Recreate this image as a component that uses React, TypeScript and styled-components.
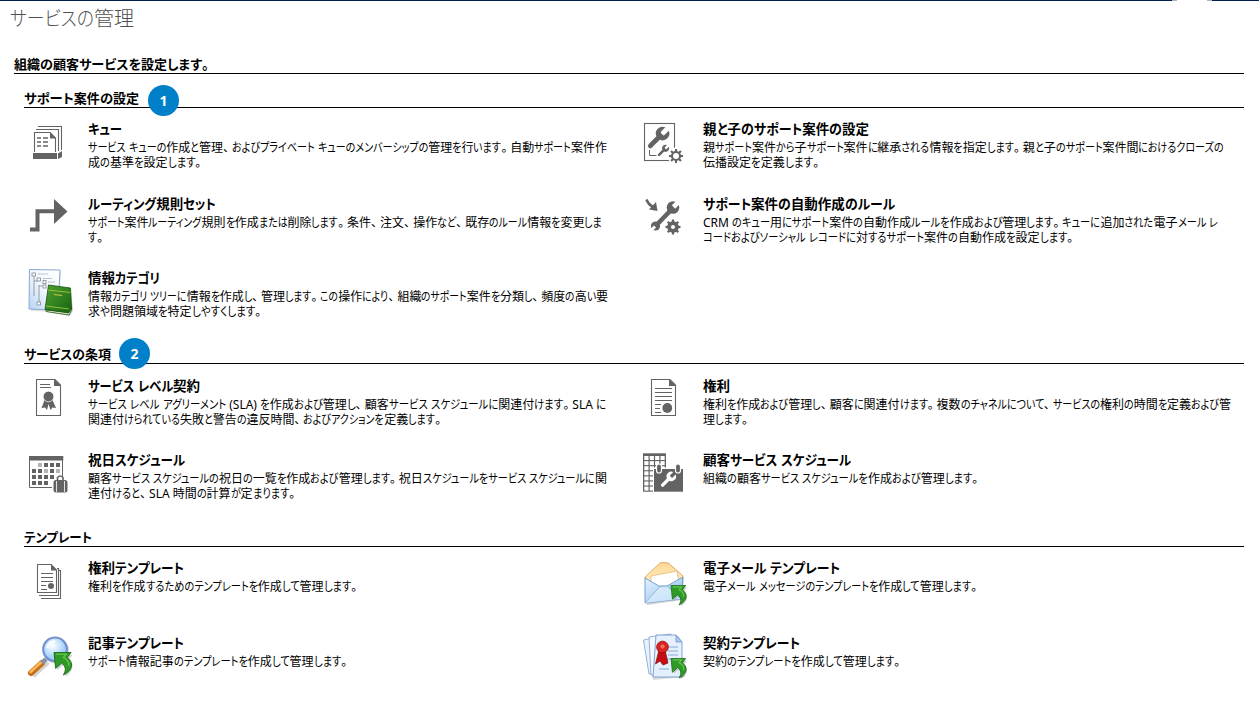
import React, { useLayoutEffect, useRef, useState } from 'react';
import styled, { createGlobalStyle } from 'styled-components';

const GREY = '#636363';

const GlobalStyle = createGlobalStyle`
  * { box-sizing: border-box; }
  body {
    margin: 0;
    background: #fff;
    color: #000;
    font-family: 'Noto Sans', 'Noto Sans CJK JP', sans-serif;
    font-feature-settings: 'palt';
  }
`;

const Page = styled.main`
  width: 1259px;
  height: 707px;
  overflow: hidden;
  background: #fff;
`;

const TopBar = styled.div`
  display: flex;
  height: 1px;
  background: #001f50;
`;

const TopNotch = styled.div`
  width: 40px;
  height: 1px;
  margin-left: 1172px;
  background: #fff;
  border: solid #b4b4b4;
  border-width: 0 5px;
`;

const PageTitle = styled.h1`
  margin: 0;
  height: 54px;
  padding: 5px 0 0 10px;
  font-size: 20px;
  line-height: 26px;
  font-weight: 300;
  color: #505050;
`;

const Intro = styled.h2`
  margin: 0 15px 0 14px;
  height: 19px;
  border-bottom: 1px solid #000;
  font-size: 13px;
  line-height: 18px;
  font-weight: 700;
`;

const Section = styled.section`
  margin: 0 15px 0 24px;
`;

const Heading = styled.h3`
  position: relative;
  margin: 0;
  height: 34px;
  padding-top: 15px;
  border-bottom: 1px solid #000;
  font-size: 13px;
  line-height: 18px;
  font-weight: 700;
`;

const Badge = styled.span<{ $left: number; $top: number }>`
  position: absolute;
  left: ${(p) => p.$left}px;
  top: ${(p) => p.$top}px;
  width: 31px;
  height: 31px;
  border-radius: 50%;
  background: #0080c8;
  color: #fff;
  font-family: 'Open Sans', sans-serif;
  font-size: 14px;
  font-weight: 700;
  line-height: 31px;
  text-align: center;
`;

const Grid = styled.div<{ $rows: string }>`
  display: grid;
  grid-template-columns: 615px 1fr;
  grid-template-rows: ${(p) => p.$rows};
`;

const Item = styled.div`
  display: flex;
`;

const IconCell = styled.div`
  width: 64px;
  padding-top: 11px;
  flex: none;
`;

const ItemText = styled.div<{ $drop?: number }>`
  padding-top: ${(p) => 12 + (p.$drop ?? 0)}px;
`;

const ItemTitle = styled.div`
  height: 20px;
  font-size: 13.5px;
  line-height: 19px;
  font-weight: 700;
`;

const ItemDescription = styled.div`
  font-size: 12px;
  line-height: 15px;
`;

const Line = styled.span`
  display: block;
  width: max-content;
  white-space: pre;
`;

const Kana = styled.span`
  display: inline-block;
  transform-origin: 0 50%;
`;

const Mark = styled.span`
  letter-spacing: 0.25em;
`;

const PARTS = /([\u3041-\u30ff]+|[\u3001\u3002]+)/;

/* One line of text whose kana are condensed until the line has its width. */
function FitLine({ text, width }: { text: string; width: number }) {
  const ref = useRef<HTMLSpanElement>(null);
  const [fit, setFit] = useState<{ scale: number; runs: number[] } | null>(null);
  useLayoutEffect(() => {
    const line = ref.current!;
    const runs = Array.from(line.querySelectorAll<HTMLElement>('[data-kana]')).map(
      (run) => run.getBoundingClientRect().width,
    );
    const total = runs.reduce((a, b) => a + b, 0);
    if (total) {
      const natural = line.getBoundingClientRect().width;
      setFit({ scale: 1 + (width - natural) / total, runs });
    }
  }, []);
  let run = -1;
  return (
    <Line ref={ref}>
      {text.split(PARTS).map((part, i) => {
        if (i % 2 === 0) return part;
        if (/^[\u3001\u3002]/.test(part)) return <Mark key={i}>{part}</Mark>;
        run += 1;
        return (
          <Kana
            key={i}
            data-kana
            style={
              fit
                ? { transform: `scaleX(${fit.scale})`, marginRight: (fit.scale - 1) * fit.runs[run] }
                : undefined
            }
          >
            {part}
          </Kana>
        );
      })}
    </Line>
  );
}

const Svg = styled.svg.attrs({ width: 52, height: 52, viewBox: '0 0 52 52' })`
  display: block;
`;

const WRENCH =
  'M14.7 6.3a1 1 0 0 0 0 1.4l1.6 1.6a1 1 0 0 0 1.4 0l3.77-3.77a6 6 0 0 1-7.94 7.94l-6.91 6.91a2.12 2.12 0 0 1-3-3l6.91-6.91a6 6 0 0 1 7.94-7.94l-3.76 3.76z';

function Gear({ x, y, r, dot }: { x: number; y: number; r: number; dot?: boolean }) {
  return (
    <g transform={`translate(${x} ${y})`}>
      <circle r={r + 1.5} fill="#fff" />
      {[0, 45, 90, 135].map((a) => (
        <path key={a} d={`M0 ${-r}V${r}`} stroke={GREY} strokeWidth={r * 0.3} transform={`rotate(${a})`} />
      ))}
      <circle r={r * 0.58} fill="#fff" stroke={GREY} strokeWidth={r * 0.3} />
      {dot && <circle r={r * 0.52} fill="#fff" stroke={GREY} strokeWidth={r * 0.5} />}
    </g>
  );
}

function GreenArrow({ x, y, s = 1 }: { x: number; y: number; s?: number }) {
  return (
    <g transform={`translate(${x} ${y}) scale(${s})`}>
      <path d="M2 2H17L13.500 6.500C18.500 10 18.500 17 10 22C12 17 11 14 8 11.500L3 16Z" fill="#777" opacity=".35" />
      <path d="M0 0H15.500L12 4.500C18 9 17.500 16 8.500 20.500C11.500 15.500 10.500 12.500 7 9.500L1.500 14.500Z" fill="#2f9a27" stroke="#176813" strokeWidth=".8" />
      <path d="M2 1.500H11L8.500 4.500C12 6 13.500 9 13.500 12" fill="none" stroke="#63c94d" strokeWidth="1.200" />
    </g>
  );
}

const QueueIcon = () => (
  <Svg>
    <g fill="none" stroke={GREY} strokeWidth="1.100">
      <path d="M14 7.500H37.500V31" />
      <path d="M12 10.500H34.500V32" />
      <path d="M10.500 33V13.500H26L31.500 19V33" />
    </g>
    <path d="M26 13V19.500H32Z" fill={GREY} />
    <path d="M13 19H17M19 19H24M13 23H17M19 23H24M13 27H17M19 27H24" stroke={GREY} strokeWidth="1.700" />
    <path d="M9 34H33V40H9ZM34 34.500L38 32V38L34 40Z" fill={GREY} />
  </Svg>
);

const RouteIcon = () => (
  <Svg>
    <path d="M6 35.500H13.500V17.200H31" fill="none" stroke={GREY} strokeWidth="4" />
    <path d="M30 5L43.500 17.500L30 30Z" fill={GREY} />
  </Svg>
);

const CategoryIcon = () => (
  <Svg>
    <defs>
      <linearGradient id="sheet" x1="1" y1="0" x2="0" y2="1">
        <stop offset="0" stopColor="#fff" />
        <stop offset=".5" stopColor="#f3f8fe" />
        <stop offset="1" stopColor="#b4d2f5" />
      </linearGradient>
      <linearGradient id="cover" x1="0" y1="0" x2="1" y2="1">
        <stop offset="0" stopColor="#4fa12f" />
        <stop offset="1" stopColor="#176414" />
      </linearGradient>
    </defs>
    <path d="M7 4L37 3L35 44L7 43Z" fill="#999" opacity=".3" />
    <path d="M5.500 1.500L36 2L34 42L5 41Z" fill="url(#sheet)" stroke="#8aa9cf" />
    <g fill="#fff" stroke="#8a949d" strokeWidth=".9">
      <path d="M10 8V28M10 13H14M15 17V35M15 18H20" fill="none" />
      <rect x="8" y="5" width="3.500" height="3" />
      <rect x="13" y="10" width="3.500" height="3" />
      <rect x="19" y="12.500" width="3" height="3" />
      <rect x="19" y="17" width="3" height="3" />
      <rect x="13" y="34" width="3.500" height="3" />
    </g>
    <path d="M14 6H24M19 10.500H28M24 14H31M24 18H30" stroke="#9aa5b1" strokeWidth=".8" strokeDasharray="2 .6" />
    <path d="M25 21L47 24L49 42L46 48L23 44Z" fill="#555" opacity=".35" />
    <path d="M22 42L45 44L47.500 39V42L45 47L22 43.500Z" fill="#f2eecd" stroke="#1b5c17" strokeWidth=".8" />
    <path d="M24.500 17L46.500 20L47.500 40L44.500 45L21 41.500Z" fill="url(#cover)" stroke="#14540f" strokeWidth=".8" />
    <path d="M24 22L46.500 24.500M22 38L45 41" stroke="#9cc63a" strokeWidth=".9" />
    <path d="M30 26.500L38 27.500" stroke="#d6c64b" strokeWidth="1.200" />
  </Svg>
);

const ParentChildIcon = () => (
  <Svg>
    <rect x="5.500" y="4.500" width="30" height="37" fill="#fff" stroke={GREY} strokeWidth="1.100" />
    <path d={WRENCH} fill={GREY} transform="translate(5.500 5.500) scale(1.130)" />
    <path d="M10.500 31V36.500H17.500" fill="none" stroke={GREY} />
    <path d={WRENCH} fill={GREY} transform="translate(17 24.500) scale(.6)" />
    <Gear x={37} y={37} r={7} />
  </Svg>
);

const AutoRuleIcon = () => (
  <Svg>
    <path d="M7.500 5.500Q9 10 14 13" fill="none" stroke={GREY} strokeWidth="2.600" />
    <path d="M18.500 17L10 15.500L17 8Z" fill={GREY} />
    <path d="M17.500 31L32 16" stroke={GREY} strokeWidth="4.600" />
    <circle cx="34" cy="13.500" r="6.300" fill={GREY} />
    <path d="M34.500 13L41 6.500" stroke="#fff" strokeWidth="4.600" />
    <circle cx="16.500" cy="32" r="4.600" fill={GREY} />
    <path d="M16 32.500L11 37.500" stroke="#fff" strokeWidth="3" />
    <Gear x={34} y={33} r={7.5} dot />
  </Svg>
);

const SlaIcon = () => (
  <Svg>
    <path d="M12.500 4.500H31L36.500 10V40.500H12.500Z" fill="#fff" stroke={GREY} strokeWidth="1.100" />
    <path d="M30 4V11H37Z" fill={GREY} />
    <path d="M16 9.500H26M16 12.500H27" stroke={GREY} />
    <path d="M21 24L17.500 33L21 32.500L23 35L24.500 29L26.500 35L28.500 32.500L32 33L28 24Z" fill={GREY} />
    <circle cx="24.500" cy="21.500" r="5.300" fill={GREY} stroke="#fff" strokeWidth=".7" />
  </Svg>
);

const CALENDAR = ['.lddd', 'ddldl', 'dddd.', 'ddd..'];
const HolidayIcon = () => (
  <Svg>
    <path d="M5.500 9V37.500H28M38.500 9V27" fill="none" stroke={GREY} />
    <rect x="5" y="6" width="34.300" height="4.500" fill={GREY} />
    {CALENDAR.map((week, r) =>
      week.split('').map((day, c) =>
        day === '.' ? null : (
          <rect
            key={`${c}-${r}`}
            x={8 + c * 6}
            y={13 + r * 6}
            width="4"
            height="4"
            fill={day === 'l' ? '#b5b5b5' : GREY}
          />
        ),
      ),
    )}
    <rect x="28" y="29" width="16.500" height="14.500" rx="3" fill="#fff" />
    <path d="M33.500 30V27.500Q36.200 24.500 39 27.500V30" fill="#fff" stroke={GREY} strokeWidth="1.600" />
    <rect x="29.500" y="30" width="14" height="12.500" rx="2.500" fill={GREY} />
    <path d="M32.500 31V42M40.500 31V42" stroke="#fff" strokeWidth=".8" />
  </Svg>
);

const EntitlementIcon = () => (
  <Svg>
    <path d="M12.500 4.500H31L36.500 10V40.500H12.500Z" fill="#fff" stroke={GREY} strokeWidth="1.100" />
    <path d="M30 4V11H37Z" fill={GREY} />
    <path d="M16 13.500H33M16 17.500H33M16 21.500H33M16 25.500H33M16 29.500H22M16 33.500H21M16 37.500H22" stroke={GREY} />
    <circle cx="28.300" cy="33" r="4.900" fill={GREY} />
  </Svg>
);

const ScheduleIcon = () => (
  <Svg>
    <rect x="4" y="3.300" width="23" height="38.400" fill={GREY} />
    {[0, 1, 2, 3, 4, 5, 6].map((r) =>
      [0, 1, 2, 3].map((c) => <rect key={`${r}${c}`} x={5.3 + c * 5.4} y={6 + r * 5.1} width="4.200" height="4" fill="#fff" />),
    )}
    <rect x="14" y="17.500" width="31" height="25" fill="#fff" />
    <rect x="15" y="19" width="29" height="22.700" fill={GREY} />
    <g fill={GREY} stroke="#fff" strokeWidth="1.200">
      <rect x="17.500" y="14" width="5" height="9" rx="2.500" />
      <rect x="36.500" y="14" width="5" height="9" rx="2.500" />
    </g>
    <path d={WRENCH} fill="#fff" transform="translate(19.500 20) scale(.8)" />
  </Svg>
);

const EntitlementTemplateIcon = () => (
  <Svg>
    <g fill="none" stroke={GREY} strokeWidth="1.100">
      <path d="M34 12.500H36.500V40.500H17" />
      <path d="M33 10.500H34.500V37.500H15" />
      <path d="M13.500 6.500H27L32.500 12V34.500H13.500Z" fill="#fff" />
      <path d="M17 15.500H29M17 19.500H29M17 23.500H29M17 27.500H22M17 31.500H23" />
    </g>
    <path d="M27 6V12.500H33Z" fill={GREY} />
    <circle cx="27" cy="28" r="3" fill={GREY} />
  </Svg>
);

const EmailIcon = () => (
  <Svg>
    <defs>
      <linearGradient id="envelope" x1="0" y1="0" x2="1" y2="1">
        <stop offset="0" stopColor="#e8f4ff" />
        <stop offset="1" stopColor="#86b8ea" />
      </linearGradient>
      <linearGradient id="flap" x1="0" y1="0" x2="0" y2="1">
        <stop offset="0" stopColor="#ffd893" />
        <stop offset="1" stopColor="#fff4d5" />
      </linearGradient>
    </defs>
    <path d="M8 21L45 21L43 42L8 47Z" fill="#777" opacity=".35" />
    <path d="M6 19L21 5Q25 3.500 30 5.500L44 18L41 34L8 30Z" fill="url(#flap)" stroke="#d7a661" strokeWidth=".9" />
    <path d="M12 18L38 13L41 30H12Z" fill="#fff" stroke="#e2b876" strokeWidth=".8" />
    <path d="M6 20L20 28L28 28L44 19L42 41L6 45Z" fill="url(#envelope)" stroke="#6a98cc" strokeWidth=".9" />
    <path d="M6 45L21 28.500L28 28L42 41" fill="#d9ecfd" fillOpacity=".8" stroke="#8bb3dd" strokeWidth=".9" />
    <GreenArrow x={32} y={27.5} s={0.95} />
  </Svg>
);

const ArticleIcon = () => (
  <Svg>
    <defs>
      <radialGradient id="lens" cx=".4" cy=".35">
        <stop offset="0" stopColor="#fff" />
        <stop offset="1" stopColor="#a5d3fb" />
      </radialGradient>
    </defs>
    <path d="M9 43L24 29" stroke="#888" strokeWidth="5" opacity=".35" />
    <path d="M7 40L18 30" stroke="#c76e17" strokeWidth="6" strokeLinecap="round" />
    <path d="M6.500 39L17 29.500" stroke="#ffbb59" strokeWidth="2.500" strokeLinecap="round" />
    <path d="M18 30L22 26" stroke="#8790a5" strokeWidth="4.500" />
    <circle cx="32" cy="17.500" r="12" fill="none" stroke="#777" strokeWidth="2" opacity=".35" />
    <circle cx="31" cy="16.300" r="11.800" fill="url(#lens)" stroke="#7491cf" strokeWidth="2.200" />
    <path d="M23.500 15Q25 9 31 8" fill="none" stroke="#fff" strokeWidth="2" />
    <GreenArrow x={30} y={19.500} s={1.1} />
  </Svg>
);

const ContractIcon = () => (
  <Svg>
    <path d="M7 8L40 3L46 44L14 47Z" fill="#888" opacity=".3" />
    <path d="M4.500 7L28 2L34 37L10 41Z" fill="#eaf2fd" stroke="#89a9d8" strokeWidth=".9" />
    <path d="M10 4L32 1L36 40L12 42Z" fill="#f5f9ff" stroke="#89a9d8" strokeWidth=".9" />
    <path d="M17 2H37L43 9V44H14Z" fill="#e5f0fe" stroke="#7697cf" strokeWidth=".9" />
    <path d="M37 2V9H43Z" fill="#a8c9f2" stroke="#7697cf" strokeWidth=".8" />
    <path d="M29 14H39M29 18H39M29 22H39M27 26H35M20 36H30" stroke="#8ba8dc" strokeWidth="1.100" />
    <path d="M20 17L16.500 31L21 28L24 32L29 30L26 17Z" fill="#c60d12" stroke="#7e0909" strokeWidth=".7" />
    <circle cx="23.500" cy="14" r="5.800" fill="#e22323" stroke="#930d0d" strokeWidth=".9" />
    <circle cx="23.500" cy="13.500" r="2.700" fill="#f76a55" stroke="#aa1111" strokeWidth=".7" />
    <GreenArrow x={32} y={25.5} s={0.95} />
  </Svg>
);

type Text = [string, number];
interface Entry {
  icon: React.FC;
  title: Text;
  lines: Text[];
  drop?: number;
}

const cases: Entry[] = [
  {
    icon: QueueIcon,
    title: ['キュー', 34],
    lines: [
      ['サービス キューの作成と管理、およびプライベート キューのメンバーシップの管理を行います。自動サポート案件作', 519],
      ['成の基準を設定します。', 116],
    ],
  },
  {
    icon: ParentChildIcon,
    title: ['親と子のサポート案件の設定', 166],
    lines: [
      ['親サポート案件から子サポート案件に継承される情報を指定します。親と子のサポート案件間におけるクローズの', 521],
      ['伝播設定を定義します。', 119],
    ],
  },
  {
    icon: RouteIcon,
    title: ['ルーティング規則セット', 128],
    lines: [
      ['サポート案件ルーティング規則を作成または削除します。条件、注文、操作など、既存のルール情報を変更しま', 514],
      ['す。', 18],
    ],
  },
  {
    icon: AutoRuleIcon,
    title: ['サポート案件の自動作成のルール', 192],
    lines: [
      ['CRM のキュー用にサポート案件の自動作成ルールを作成および管理します。キューに追加された電子メール レ', 515],
      ['コードおよびソーシャル レコードに対するサポート案件の自動作成を設定します。', 373],
    ],
  },
  {
    icon: CategoryIcon,
    title: ['情報カテゴリ', 72],
    lines: [
      ['情報カテゴリ ツリーに情報を作成し、管理します。この操作により、組織のサポート案件を分類し、頻度の高い要', 520],
      ['求や問題領域を特定しやすくします。', 176],
    ],
  },
];

const terms: Entry[] = [
  {
    icon: SlaIcon,
    drop: 1,
    title: ['サービス レベル契約', 112],
    lines: [
      ['サービス レベル アグリーメント (SLA) を作成および管理し、顧客サービス スケジュールに関連付けます。SLA に', 518],
      ['関連付けられている失敗と警告の違反時間、およびアクションを定義します。', 356],
    ],
  },
  {
    icon: EntitlementIcon,
    drop: 1,
    title: ['権利', 28],
    lines: [
      ['権利を作成および管理し、顧客に関連付けます。複数のチャネルについて、サービスの権利の時間を定義および管', 528],
      ['理します。', 48],
    ],
  },
  {
    icon: HolidayIcon,
    title: ['祝日スケジュール', 97],
    lines: [
      ['顧客サービス スケジュールの祝日の一覧を作成および管理します。祝日スケジュールをサービス スケジュールに関', 519],
      ['連付けると、SLA 時間の計算が定まります。', 210],
    ],
  },
  {
    icon: ScheduleIcon,
    title: ['顧客サービス スケジュール', 148],
    lines: [['組織の顧客サービス スケジュールを作成および管理します。', 278]],
  },
];

const templates: Entry[] = [
  {
    icon: EntitlementTemplateIcon,
    title: ['権利テンプレート', 96],
    lines: [['権利を作成するためのテンプレートを作成して管理します。', 272]],
  },
  {
    icon: EmailIcon,
    title: ['電子メール テンプレート', 137],
    lines: [['電子メール メッセージのテンプレートを作成して管理します。', 277]],
  },
  {
    icon: ArticleIcon,
    title: ['記事テンプレート', 96],
    lines: [['サポート情報記事のテンプレートを作成して管理します。', 262]],
  },
  {
    icon: ContractIcon,
    title: ['契約テンプレート', 97],
    lines: [['契約のテンプレートを作成して管理します。', 200]],
  },
];

function Entries({ entries, rows }: { entries: Entry[]; rows: string }) {
  return (
    <Grid $rows={rows}>
      {entries.map(({ icon: Icon, title, lines, drop }) => (
        <Item key={title[0]}>
          <IconCell>
            <Icon />
          </IconCell>
          <ItemText $drop={drop}>
            <ItemTitle>
              <FitLine text={title[0]} width={title[1]} />
            </ItemTitle>
            <ItemDescription>
              {lines.map(([text, width]) => (
                <FitLine key={text} text={text} width={width} />
              ))}
            </ItemDescription>
          </ItemText>
        </Item>
      ))}
    </Grid>
  );
}

export default function App() {
  return (
    <Page>
      <GlobalStyle />
      <TopBar>
        <TopNotch />
      </TopBar>
      <PageTitle>
        <FitLine text="サービスの管理" width={124} />
      </PageTitle>
      <Intro>
        <FitLine text="組織の顧客サービスを設定します。" width={198} />
      </Intro>
      <Section>
        <Heading>
          <FitLine text="サポート案件の設定" width={115} />
          <Badge $left={124} $top={11}>1</Badge>
        </Heading>
        <Entries entries={cases} rows="75px 74px 73px" />
      </Section>
      <Section>
        <Heading>
          <FitLine text="サービスの条項" width={87} />
          <Badge $left={95} $top={8}>2</Badge>
        </Heading>
        <Entries entries={terms} rows="75px 74px" />
      </Section>
      <Section>
        <Heading>
          <FitLine text="テンプレート" width={68} />
        </Heading>
        <Entries entries={templates} rows="75px 74px" />
      </Section>
    </Page>
  );
}
